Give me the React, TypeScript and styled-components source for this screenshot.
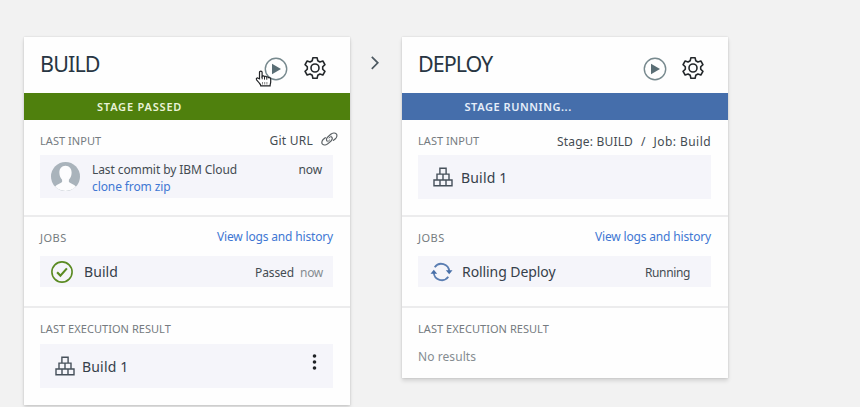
import React from 'react';
import styled, { createGlobalStyle } from 'styled-components';

const GlobalStyle = createGlobalStyle`
  * { box-sizing: border-box; }
  body {
    margin: 0;
    background: #f2f2f2;
    color: #3b444b;
    font-family: 'Noto Sans', sans-serif;
    overflow: hidden;
  }
  svg { display: block; flex: none; }
`;

const Pipeline = styled.main`
  display: flex;
  align-items: flex-start;
  height: 407px;
  padding: 37px 0 0 24px;
  overflow: hidden;
`;

const Card = styled.article`
  width: 326px;
  flex: none;
  background: #fefefe;
  box-shadow: 0 0 2px rgba(0, 0, 0, 0.14), 0 3px 4px rgba(0, 0, 0, 0.12);
`;

const Connector = styled.div`
  display: flex;
  justify-content: center;
  width: 52px;
  padding: 18px 2px 0 0;
`;

const Header = styled.header`
  display: flex;
  align-items: flex-start;
  justify-content: space-between;
  height: 56px;
  padding: 0 23px 0 16px;
`;

const Title = styled.h2<{ $tracking: number }>`
  margin: 0;
  font-size: 21.5px;
  font-weight: 400;
  line-height: 54px;
  letter-spacing: ${(p) => p.$tracking}px;
  color: #283643;
`;

const Actions = styled.div`
  display: flex;
  gap: ${(p: { $gap: number }) => p.$gap}px;
  padding-top: 19px;
`;

const RunButton = styled.div`
  position: relative;
  padding-top: 1px;
`;

const Pointer = styled.div`
  position: absolute;
  left: -9px;
  top: 14px;
`;

const Banner = styled.div<{ $running?: boolean; $tracking: number }>`
  height: 27px;
  padding-left: ${(p) => (p.$running ? 62.5 : 73)}px;
  background: ${(p) => (p.$running ? '#456eab' : '#4f800d')};
  color: ${(p) => (p.$running ? '#e6eefa' : '#eaf3d8')};
  font-size: 11px;
  font-weight: 600;
  line-height: 27px;
  letter-spacing: ${(p) => p.$tracking}px;
`;

const Section = styled.section<{ $height: number }>`
  height: ${(p) => p.$height}px;
  padding: 0 17px 0 16px;
  border-bottom: 2px solid #ececed;
  &:last-child { border-bottom: 0; }
`;

const SectionHead = styled.div<{ $height: number }>`
  display: flex;
  justify-content: space-between;
  height: ${(p) => p.$height}px;
`;

const Label = styled.h3<{ $tracking?: number }>`
  margin: 0;
  font-size: 11px;
  font-weight: 400;
  line-height: 42px;
  letter-spacing: ${(p) => p.$tracking ?? 0.05}px;
  color: #757b80;
`;

const Text = styled.span<{ $tracking?: number; $muted?: boolean }>`
  font-size: 12px;
  line-height: 17px;
  letter-spacing: ${(p) => p.$tracking ?? 0}px;
  color: ${(p) => (p.$muted ? '#858c91' : '#444c52')};
  white-space: pre;
`;

const Link = styled.a<{ $tracking: number }>`
  font-size: 12px;
  line-height: 17px;
  letter-spacing: ${(p) => p.$tracking}px;
  color: #4077d3;
  white-space: nowrap;
`;

const HeadAside = styled.div<{ $top: number }>`
  display: flex;
  gap: 8px;
  height: 17px;
  margin-top: ${(p) => p.$top}px;
`;

const GitAside = styled(HeadAside)`
  margin-right: -5px;
`;

const Row = styled.div<{ $height: number; $left: number; $right?: number }>`
  display: flex;
  align-items: center;
  height: ${(p) => p.$height}px;
  padding: 0 ${(p) => p.$right ?? 10}px 0 ${(p) => p.$left}px;
  background: #f5f5fa;
`;

const Name = styled.span<{ $tracking: number; $gap: number }>`
  margin: 1px auto 0 ${(p) => p.$gap}px;
  font-size: 14px;
  line-height: 20px;
  letter-spacing: ${(p) => p.$tracking}px;
  color: #36404a;
`;

const Status = styled.div`
  display: flex;
  gap: 6px;
  padding-top: 1px;
`;

const Commit = styled.div`
  display: flex;
  flex: 1;
  flex-direction: column;
  align-self: flex-start;
  padding: 6px 0 0 12px;
`;

const When = styled.div`
  display: flex;
  align-self: flex-start;
  padding-top: 6px;
`;

const KebabSlot = styled.div`
  align-self: flex-start;
  padding-top: 9px;
`;

const PlayIcon = () => (
  <svg width="24" height="24" viewBox="0 0 24 24">
    <circle cx="12" cy="12" r="10.7" fill="none" stroke="#77898e" strokeWidth="1.4" />
    <path d="M8 6.8 17 12l-9 5.2Z" fill="#5a6e75" />
  </svg>
);

const GearIcon = () => (
  <svg width="24" height="24" viewBox="0 0 24 24" fill="none" stroke="#23272a" strokeWidth="1.6" strokeLinejoin="round">
    <path d="M9.9 1.7h4.2l.65 3 2.15 1.25 2.95-.95 2.1 3.65-2.25 2.1v2.5l2.25 2.1-2.1 3.65-2.95-.95-2.15 1.25-.65 3H9.9l-.65-3L7.1 18.05 4.15 19l-2.1-3.65 2.25-2.1v-2.5l-2.25-2.1L4.15 5l2.95.95L9.25 4.7Z" />
    <circle cx="12" cy="12" r="4" />
  </svg>
);

const HandIcon = () => (
  <svg width="18" height="18" viewBox="0 0 18 18">
    <path
      d="M4.5 8.8V2.3c0-1.7 2.6-1.7 2.6 0v4c.5-.7 2-.6 2.3.3.7-.6 2-.4 2.3.5.8-.4 1.8-.1 2.1.7 1-.3 1.9.2 1.9 1.3V12c0 1.3-.6 2-.6 3.8H5.8c0-1.6-1.2-2.3-2-3.3L1.6 9.8c-.9-1.3.6-2.4 1.7-1.6Z"
      fill="#fff"
      stroke="#202225"
      strokeWidth="1.2"
    />
    <path d="M7.2 6.3v3M9.5 7v2.6M11.8 7.5v2.2" stroke="#202225" />
    <path d="M7.5 12v2.5M9.7 12v2.5M11.9 12v2.5" stroke="#666" strokeWidth=".8" />
  </svg>
);

const ChevronIcon = () => (
  <svg width="10" height="16" viewBox="0 0 10 16" fill="none" stroke="#4d5961" strokeWidth="1.7">
    <path d="m1.8 1.8 6 6-6 6" />
  </svg>
);

const ChainIcon = () => (
  <svg width="17" height="14" viewBox="0 0 17 14" fill="none" stroke="#5b6165" strokeWidth="1.2" strokeLinecap="round">
    <path d="M6.3 9.2C4.8 7.8 5.5 6.2 6.8 5l3-2.7c1.6-1.4 4.2-1.8 5.5-.5 1.2 1.3.6 3.6-.9 4.9l-1.9 1.6" />
    <path d="M10.4 4.8c1.5 1.4.9 3-.4 4.2l-3 2.6c-1.6 1.4-4.2 1.9-5.5.6-1.2-1.3-.6-3.6.9-4.9l1.9-1.6" />
    <path d="m8 6 2-1.6M7 9.5l1.8-1.7" strokeWidth=".9" />
  </svg>
);

const AvatarIcon = () => (
  <svg width="29" height="29" viewBox="0 0 29 29">
    <circle cx="14.5" cy="14.5" r="14.5" fill="#a9b3bb" />
    <path
      d="M14.5 3.8c4.1 0 6.3 3.2 6.1 7.3-.1 2.9-1 5-2.7 6.7v2.1c1.6 1.6 5 1.9 7 4.6a14.5 14.5 0 0 1-20.8 0c2-2.7 5.4-3 7-4.6v-2.1C9.400 16.100 8.500 14 8.400 11.100 8.200 7 10.400 3.800 14.500 3.800Z"
      fill="#fdfdfe"
    />
  </svg>
);

const CheckIcon = () => (
  <svg width="22" height="22" viewBox="0 0 22 22" fill="none" stroke="#5a8a22">
    <circle cx="11" cy="11" r="10.1" strokeWidth="1.6" />
    <path d="m6.1 11.2 3.3 3.4 6.5-7.2" strokeWidth="2.1" />
  </svg>
);

const BlocksIcon = () => (
  <svg width="20" height="20" viewBox="0 0 20 20" fill="none" stroke="#46505a" strokeWidth="1.4">
    <path d="M6.900 1.200h6.200v5.900H6.900ZM4 7.100h12v5.900H4ZM10 7.100V13M1 13h18v5.800H1ZM7 13v5.800M13 13v5.800" />
  </svg>
);

const SyncIcon = () => (
  <svg width="23" height="20" viewBox="0 0 23 20" fill="none" stroke="#5b7eb2" strokeWidth="1.8">
    <path d="M4.700 5.200a8 8 0 0 1 14.500 4.300" />
    <path d="M18.300 14.800A8 8 0 0 1 3.800 10.500" />
    <path d="M15.800 8.300h6.700l-3.300 4ZM.5 11.700h6.700l-3.400-4Z" fill="#486fa8" stroke="none" />
  </svg>
);

const KebabIcon = () => (
  <svg width="5" height="18" viewBox="0 0 5 18" fill="#202326">
    <circle cx="2.500" cy="3" r="1.800" />
    <circle cx="2.500" cy="9" r="1.800" />
    <circle cx="2.500" cy="15" r="1.800" />
  </svg>
);

function BuildStage() {
  return (
    <Card>
      <Header>
        <Title $tracking={-0.85}>BUILD</Title>
        <Actions $gap={15}>
          <RunButton>
            <PlayIcon />
            <Pointer><HandIcon /></Pointer>
          </RunButton>
          <GearIcon />
        </Actions>
      </Header>
      <Banner $tracking={0.8}>STAGE PASSED</Banner>
      <Section $height={97}>
        <SectionHead $height={35}>
          <Label>LAST INPUT</Label>
          <GitAside $top={12}>
            <Text $tracking={0.25}>Git URL</Text>
            <ChainIcon />
          </GitAside>
        </SectionHead>
        <Row $height={43} $left={11} $right={11}>
          <AvatarIcon />
          <Commit>
            <Text $tracking={-0.09}>Last commit by IBM Cloud</Text>
            <Link $tracking={-0.1}>clone from zip</Link>
          </Commit>
          <When><Text $tracking={-0.1}>now</Text></When>
        </Row>
      </Section>
      <Section $height={91}>
        <SectionHead $height={39}>
          <Label $tracking={0.5}>JOBS</Label>
          <HeadAside $top={11}><Link $tracking={-0.17}>View logs and history</Link></HeadAside>
        </SectionHead>
        <Row $height={31} $left={11}>
          <CheckIcon />
          <Name $gap={11} $tracking={0.08}>Build</Name>
          <Status>
            <Text $tracking={-0.1}>Passed</Text>
            <Text $tracking={-0.3} $muted>now</Text>
          </Status>
        </Row>
      </Section>
      <Section $height={97}>
        <SectionHead $height={36}>
          <Label>LAST EXECUTION RESULT</Label>
        </SectionHead>
        <Row $height={44} $left={15} $right={16}>
          <BlocksIcon />
          <Name $gap={7} $tracking={0.18}>Build 1</Name>
          <KebabSlot><KebabIcon /></KebabSlot>
        </Row>
      </Section>
    </Card>
  );
}

function DeployStage() {
  return (
    <Card>
      <Header>
        <Title $tracking={-1}>DEPLOY</Title>
        <Actions $gap={14}>
          <RunButton><PlayIcon /></RunButton>
          <GearIcon />
        </Actions>
      </Header>
      <Banner $running $tracking={0.56}>STAGE RUNNING...</Banner>
      <Section $height={97}>
        <SectionHead $height={35}>
          <Label>LAST INPUT</Label>
          <HeadAside $top={13}>
            <Text $tracking={0.18}>Stage: BUILD</Text>
            <Text>/</Text>
            <Text $tracking={0.44}>Job: Build</Text>
          </HeadAside>
        </SectionHead>
        <Row $height={44} $left={15}>
          <BlocksIcon />
          <Name $gap={8} $tracking={0.18}>Build 1</Name>
        </Row>
      </Section>
      <Section $height={91}>
        <SectionHead $height={39}>
          <Label $tracking={0.5}>JOBS</Label>
          <HeadAside $top={11}><Link $tracking={-0.17}>View logs and history</Link></HeadAside>
        </SectionHead>
        <Row $height={31} $left={12} $right={21}>
          <SyncIcon />
          <Name $gap={9} $tracking={-0.08}>Rolling Deploy</Name>
          <Status><Text $tracking={-0.37}>Running</Text></Status>
        </Row>
      </Section>
      <Section $height={70}>
        <SectionHead $height={36}>
          <Label>LAST EXECUTION RESULT</Label>
        </SectionHead>
        <Text $tracking={0.07} $muted>No results</Text>
      </Section>
    </Card>
  );
}

export default function App() {
  return (
    <>
      <GlobalStyle />
      <Pipeline>
        <BuildStage />
        <Connector><ChevronIcon /></Connector>
        <DeployStage />
      </Pipeline>
    </>
  );
}
